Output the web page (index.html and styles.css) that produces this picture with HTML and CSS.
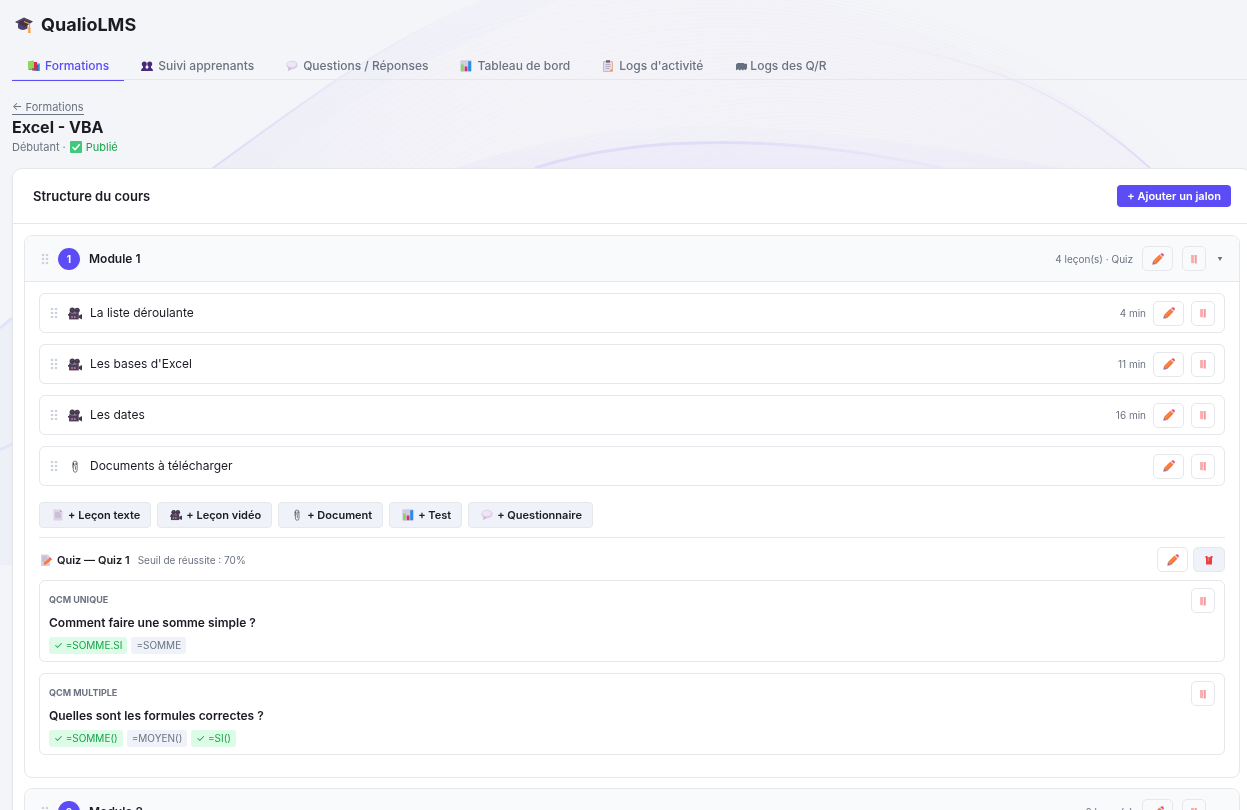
FILE: index.html
```html
<!DOCTYPE html>
<html lang="fr">
<head>
  <meta charset="UTF-8">
  <meta name="viewport" content="width=device-width, initial-scale=1.0">
  <title>QualioLMS</title>
  <link rel="stylesheet" href="styles.css">
</head>
<body>
  <!-- icon set -->
  <svg class="sprite" aria-hidden="true">
    <symbol id="i-cap" viewBox="0 0 18 18">
      <path d="M3 8v4q4.500 3.500 9.500.5V8z" fill="#54406f"/>
      <path d="M0 6 9 1.500 18 5.500 10 11z" fill="#40354f"/>
      <path d="M2 6.200 9 2.700 15.500 5.600" fill="none" stroke="#65587a" stroke-width=".8"/>
      <path d="M9 5.500 14.500 8v5" fill="none" stroke="#f59b2e" stroke-width="1.200"/>
      <path d="M13.300 11h2l.3 6h-2.600z" fill="#f9a04b"/>
    </symbol>
    <symbol id="i-books" viewBox="0 0 12 12">
      <path d="M6 3.500h6V11H6z" fill="#2fb5ea"/>
      <path d="M4 2h5v8.500H4z" fill="#d42a56"/>
      <path d="M9 5v6h1.500V5z" fill="#176fc4"/>
      <path d="M0 1.200 6 .5v7.800L0 9z" fill="#8fd65a"/>
      <path d="M0 9 6 8.300l1 1L1.500 10z" fill="#4a9a4d"/>
    </symbol>
    <symbol id="i-people" viewBox="0 0 12 12">
      <g fill="#48297c">
        <circle cx="3.300" cy="4" r="2.500"/><circle cx="8.700" cy="4" r="2.500"/>
        <path d="M2 5h2.600v3H2zM7.400 5H10v3H7.400zM0 11q0-3 3.200-3.500Q6 8 6 9.500 6 8 8.800 7.500 12 8 12 11z"/>
      </g>
    </symbol>
    <symbol id="i-bubble" viewBox="0 0 12 12">
      <ellipse cx="6" cy="5" rx="5.700" ry="4.200" fill="#dccdeb"/>
      <path d="M2.500 7.500 2 11l4-2z" fill="#cdb9df"/>
      <ellipse cx="5.700" cy="4.300" rx="4.400" ry="2.800" fill="#eee5f6"/>
    </symbol>
    <symbol id="i-chart" viewBox="0 0 12 12">
      <rect x=".3" y=".3" width="11.400" height="11.400" rx="1" fill="#d5cbe0"/>
      <path d="M1 4.500h2.800v6.700H1z" fill="#7fdb5f"/>
      <path d="M4.700 6.500h2.700v4.700H4.700z" fill="#d92c69"/>
      <path d="M8.200 1.200h2.900v10H8.200z" fill="#258dea"/>
    </symbol>
    <symbol id="i-clipboard" viewBox="0 0 12 12">
      <rect x="1" y="1" width="10" height="11" rx="1" fill="#eab28e"/>
      <path d="M2 2h8v7l-2 2H2z" fill="#e2dbea"/>
      <path d="M10 9v2H8z" fill="#ee843f"/>
      <path d="M4 .2h4v2.500H4z" fill="#70667c"/>
      <path d="M3.500 4.500h5M3.500 6.500h5M3.500 8.500h4" stroke="#a69ab5" stroke-width=".7"/>
    </symbol>
    <symbol id="i-chats" viewBox="0 0 12 12">
      <path d="M1 4.500 2.500 3h6l1 .8H12v5h-.8V10H10V9.500H8.500v.7H7V9.500H5.500v.8H4V9.500H2.800L1 10.200z" fill="#68707f"/>
    </symbol>
    <symbol id="i-check" viewBox="0 0 12 12">
      <rect width="12" height="12" rx="1" fill="#42c87c"/>
      <path d="m2.500 6 2.500 2.700L9.700 3.300" fill="none" stroke="#fff" stroke-width="1.500"/>
    </symbol>
    <symbol id="i-camera" viewBox="0 0 13 12">
      <circle cx="4" cy="3" r="2.500" fill="#44374f"/><circle cx="8.500" cy="3" r="2.400" fill="#44374f"/>
      <path d="M1 5h9v6.500H1z" fill="#4d4158"/>
      <path d="m10 8 3-1.500v5L10 10z" fill="#443650"/>
      <path d="M0 6.500h2v1.500H0z" fill="#44374f"/>
      <path d="M3 8.500h1.500V10H3zM5.500 8.500H7V10H5.500z" fill="#e77cba"/>
      <path d="M3.200 2.500h1M7.800 2.500h1M3 6h5" stroke="#83778e" stroke-width=".7"/>
    </symbol>
    <symbol id="i-clip" viewBox="0 0 12 12">
      <path d="M4 7V3q0-2 2-2t2 2v6q0 2.300-1.800 2.300T4.400 9V6q0-1.200 1-1.200t1 1.200v3" fill="none" stroke="#77737a" stroke-width=".9"/>
      <path d="M4.200 2.500h1v2h-1zM6.500 2.500h1v2h-1z" fill="#3c3940"/>
    </symbol>
    <symbol id="i-page" viewBox="0 0 12 12">
      <path d="M1.500.5H8L10.500 3v8.500h-9z" fill="#ddd2e6"/>
      <path d="M8 .5V3h2.500z" fill="#b8a6c8"/>
      <path d="M3 4h5M3 6h6M3 8h6" stroke="#b3a3c4" stroke-width=".8"/>
    </symbol>
    <symbol id="i-memo" viewBox="0 0 12 12">
      <path d="M1 .5h7L10 3v9H1z" fill="#d9cfe3"/>
      <path d="M2.500 3h4M2.500 5h5M2.500 7h3" stroke="#a99cb9" stroke-width=".7"/>
      <path d="m3.500 11 .7-2.500L9 4.200l2 2L6 10.500z" fill="#fa7934"/>
      <path d="m9 4.200 1-.9 2 2-1 .9z" fill="#e4504d"/>
    </symbol>
    <symbol id="i-pencil" viewBox="0 0 12 12">
      <path d="M.3 11.700 1 8l3.300 3z" fill="#a0708f"/>
      <path d="M1 8 7.300 1.800l3 3L4.300 11z" fill="#f8733a"/>
      <path d="m2.400 9 6.300-6" stroke="#ff9a45" stroke-width="1"/>
      <path d="m7.300 1.800.9-.9 3 3-.9.900z" fill="#cbbfda"/>
      <path d="M8.500 1q1.500-1.500 2.700-.2t0 2.800z" fill="#ee4852"/>
    </symbol>
    <symbol id="i-trash" viewBox="0 0 12 12">
      <path d="M3.500 2h5v8.500h-5z" fill="#fcdede"/>
      <path d="M3.500 2.500h1v7.500h-1zM7.300 2h1.200v8.500H7.300z" fill="#f37b7e"/>
      <path d="M5.500 2.500v7.500M3 2.500h2.500M6.500 2.800H9" stroke="#f6abad" stroke-width=".9"/>
    </symbol>
    <symbol id="i-trash-full" viewBox="0 0 12 12">
      <path d="M2.500 2h2v1.300h3V2h2v2H9v6.500H3V4h-.5z" fill="#ee3f43"/>
      <path d="M5.300 4v3" stroke="#f7a3a6" stroke-width=".7"/>
    </symbol>
    <symbol id="i-grip" viewBox="0 0 8 12">
      <g fill="#cbd2df">
        <circle cx="2" cy="2" r="1.300"/><circle cx="6" cy="2" r="1.300"/>
        <circle cx="2" cy="6" r="1.300"/><circle cx="6" cy="6" r="1.300"/>
        <circle cx="2" cy="10" r="1.300"/><circle cx="6" cy="10" r="1.300"/>
      </g>
    </symbol>
  </svg>

  <!-- decorative waves -->
  <svg class="waves" viewBox="0 0 1247 810" preserveAspectRatio="xMidYMin slice" aria-hidden="true">
    <defs>
      <linearGradient id="dome" x1="0" x2="1" y1="0" y2="0">
        <stop offset="0" stop-color="#ebebf6"/>
        <stop offset=".35" stop-color="#f3f3f8"/>
        <stop offset="1" stop-color="#f0eff7"/>
      </linearGradient>
      <linearGradient id="edge" x1="0" x2="0" y1="0" y2="1">
        <stop offset="0" stop-color="#dedbf8" stop-opacity="0"/>
        <stop offset="1" stop-color="#dedaf8"/>
      </linearGradient>
      <linearGradient id="hill" x1="0" x2="0" y1="0" y2="1">
        <stop offset="0" stop-color="#edebf8" stop-opacity=".4"/>
        <stop offset="1" stop-color="#ebe8f8"/>
      </linearGradient>
      <linearGradient id="crest" x1="0" x2="1" y1="0" y2="0">
        <stop offset="0" stop-color="#dfdcf8"/>
        <stop offset=".5" stop-color="#e1ddf7"/>
        <stop offset="1" stop-color="#e6e2f8" stop-opacity=".5"/>
      </linearGradient>
    </defs>
    <path d="M213 168C330 82 420 15 560-30H700C900 20 1060 70 1150 168z" fill="url(#dome)" opacity=".6"/>
    <path d="M213 168C330 82 440 10 560-30L600-20C480 40 340 90 270 168z" fill="#eeeef8" opacity=".4"/>
    <path d="M213 168C310 97 380 45 480 0" fill="none" stroke="url(#edge)" stroke-width="2"/>
    <path d="M840 35C990 60 1065 92 1150 168" fill="none" stroke="url(#edge)" stroke-width="2"/>
    <g id="wave-lines" fill="none" stroke="#e9e8f3" stroke-width="1" opacity=".4"></g>
    <path d="M455 168C600 120 720 105 1060 168z" fill="url(#hill)" opacity=".6"/>
    <path d="M535 168C640 134 790 134 942 168z" fill="#ece9f9" opacity=".6"/>
    <path d="M535 168C640 134 790 134 942 168" fill="none" stroke="url(#crest)" stroke-width="3"/>
    <path d="M0 328 12 318V565H0z" fill="#eef0f7"/>
    <path d="M0 328 12 318M0 450 12 444" stroke="#e2e5f7" stroke-width="3"/>
  </svg>

  <header class="topbar">
    <h1 class="brand"><svg class="brand-icon"><use href="#i-cap"/></svg>QualioLMS</h1>
    <nav class="tabs">
      <a class="tab active" href="#formations"><svg class="icon"><use href="#i-books"/></svg>Formations</a>
      <a class="tab" href="#suivi"><svg class="icon"><use href="#i-people"/></svg>Suivi apprenants</a>
      <a class="tab" href="#questions"><svg class="icon"><use href="#i-bubble"/></svg>Questions / Réponses</a>
      <a class="tab" href="#dashboard"><svg class="icon"><use href="#i-chart"/></svg>Tableau de bord</a>
      <a class="tab" href="#logs"><svg class="icon"><use href="#i-clipboard"/></svg>Logs d'activité</a>
      <a class="tab tab-tight" href="#logs-qr"><svg class="icon"><use href="#i-chats"/></svg>Logs des Q/R</a>
    </nav>
  </header>

  <main class="page">
    <div class="course-head">
      <a class="back" href="#formations">← Formations</a>
      <h2 class="course-title">Excel - VBA</h2>
      <p class="course-meta">Débutant · <svg class="icon"><use href="#i-check"/></svg> <span class="published">Publié</span></p>
    </div>

    <section class="card">
      <div class="card-head">
        <h3 class="card-title">Structure du cours</h3>
        <button class="btn-primary" type="button">+ Ajouter un jalon</button>
      </div>
      <div class="card-body">
        <article class="module">
          <div class="module-head">
            <svg class="grip"><use href="#i-grip"/></svg>
            <span class="module-num">1</span>
            <h4 class="module-title">Module 1</h4>
            <span class="meta">4 leçon(s) · Quiz</span>
            <button class="btn-icon" type="button" aria-label="Modifier"><svg class="icon"><use href="#i-pencil"/></svg></button>
            <button class="btn-icon btn-del" type="button" aria-label="Supprimer"><svg class="icon"><use href="#i-trash"/></svg></button>
            <button class="toggle" type="button" aria-label="Replier">▼</button>
          </div>
          <div class="module-body">
            <ul class="lessons">
              <li class="lesson">
                <svg class="grip"><use href="#i-grip"/></svg>
                <svg class="lesson-icon"><use href="#i-camera"/></svg>
                <span class="lesson-title">La liste déroulante</span>
                <span class="meta">4 min</span>
                <button class="btn-icon" type="button" aria-label="Modifier"><svg class="icon"><use href="#i-pencil"/></svg></button>
                <button class="btn-icon btn-del" type="button" aria-label="Supprimer"><svg class="icon"><use href="#i-trash"/></svg></button>
              </li>
              <li class="lesson">
                <svg class="grip"><use href="#i-grip"/></svg>
                <svg class="lesson-icon"><use href="#i-camera"/></svg>
                <span class="lesson-title">Les bases d'Excel</span>
                <span class="meta">11 min</span>
                <button class="btn-icon" type="button" aria-label="Modifier"><svg class="icon"><use href="#i-pencil"/></svg></button>
                <button class="btn-icon btn-del" type="button" aria-label="Supprimer"><svg class="icon"><use href="#i-trash"/></svg></button>
              </li>
              <li class="lesson">
                <svg class="grip"><use href="#i-grip"/></svg>
                <svg class="lesson-icon"><use href="#i-camera"/></svg>
                <span class="lesson-title">Les dates</span>
                <span class="meta">16 min</span>
                <button class="btn-icon" type="button" aria-label="Modifier"><svg class="icon"><use href="#i-pencil"/></svg></button>
                <button class="btn-icon btn-del" type="button" aria-label="Supprimer"><svg class="icon"><use href="#i-trash"/></svg></button>
              </li>
              <li class="lesson">
                <svg class="grip"><use href="#i-grip"/></svg>
                <svg class="lesson-icon"><use href="#i-clip"/></svg>
                <span class="lesson-title">Documents à télécharger</span>
                <button class="btn-icon" type="button" aria-label="Modifier"><svg class="icon"><use href="#i-pencil"/></svg></button>
                <button class="btn-icon btn-del" type="button" aria-label="Supprimer"><svg class="icon"><use href="#i-trash"/></svg></button>
              </li>
            </ul>

            <div class="add-row">
              <button class="btn-add" type="button"><svg class="icon"><use href="#i-page"/></svg>+ Leçon texte</button>
              <button class="btn-add" type="button"><svg class="icon"><use href="#i-camera"/></svg>+ Leçon vidéo</button>
              <button class="btn-add" type="button"><svg class="icon"><use href="#i-clip"/></svg>+ Document</button>
              <button class="btn-add" type="button"><svg class="icon"><use href="#i-chart"/></svg>+ Test</button>
              <button class="btn-add" type="button"><svg class="icon"><use href="#i-bubble"/></svg>+ Questionnaire</button>
            </div>

            <section class="quiz">
              <div class="quiz-head">
                <svg class="icon"><use href="#i-memo"/></svg>
                <h5 class="quiz-title">Quiz — Quiz 1</h5>
                <span class="meta quiz-meta">Seuil de réussite : 70%</span>
                <button class="btn-icon" type="button" aria-label="Modifier"><svg class="icon"><use href="#i-pencil"/></svg></button>
                <button class="btn-icon btn-grey" type="button" aria-label="Supprimer"><svg class="icon"><use href="#i-trash-full"/></svg></button>
              </div>
              <div class="questions">
                <div class="question">
                  <div class="question-main">
                    <div class="question-type">QCM UNIQUE</div>
                    <div class="question-text">Comment faire une somme simple ?</div>
                    <div class="answers">
                      <span class="answer ok">✓ =SOMME.SI</span>
                      <span class="answer">=SOMME</span>
                    </div>
                  </div>
                  <button class="btn-icon btn-del" type="button" aria-label="Supprimer"><svg class="icon"><use href="#i-trash"/></svg></button>
                </div>
                <div class="question">
                  <div class="question-main">
                    <div class="question-type">QCM MULTIPLE</div>
                    <div class="question-text">Quelles sont les formules correctes ?</div>
                    <div class="answers">
                      <span class="answer ok">✓ =SOMME()</span>
                      <span class="answer">=MOYEN()</span>
                      <span class="answer ok">✓ =SI()</span>
                    </div>
                  </div>
                  <button class="btn-icon btn-del" type="button" aria-label="Supprimer"><svg class="icon"><use href="#i-trash"/></svg></button>
                </div>
              </div>
            </section>
          </div>
        </article>

        <article class="module">
          <div class="module-head">
            <svg class="grip"><use href="#i-grip"/></svg>
            <span class="module-num">2</span>
            <h4 class="module-title">Module 2</h4>
            <span class="meta">0 leçon(s)</span>
            <button class="btn-icon" type="button" aria-label="Modifier"><svg class="icon"><use href="#i-pencil"/></svg></button>
            <button class="btn-icon btn-del" type="button" aria-label="Supprimer"><svg class="icon"><use href="#i-trash"/></svg></button>
            <button class="toggle" type="button" aria-label="Replier">▼</button>
          </div>
        </article>
      </div>
    </section>
  </main>
  <script src="waves.js"></script>
</body>
</html>
```
FILE: styles.css
```css
* {
  box-sizing: border-box;
}
html {
  overflow-x: hidden;
  scrollbar-width: none;
}
body {
  margin: 0;
  background: #f4f5f8;
  color: #1a1b23;
  font-family: Inter, "Liberation Sans", sans-serif;
  font-size: 12px;
  line-height: 16px;
}
h1, h2, h3, h4, h5, p, ul {
  margin: 0;
  padding: 0;
}
button {
  font-family: inherit;
  cursor: pointer;
}
.sprite {
  position: absolute;
  width: 0;
  height: 0;
}
.waves {
  position: fixed;
  left: 0;
  top: 0;
  width: 100%;
  height: 100%;
  z-index: -1;
}
.icon {
  width: 12px;
  height: 12px;
  flex: none;
}

/* header */
.topbar {
  padding: 13px 0 0 12px;
}
.brand {
  display: flex;
  align-items: center;
  gap: 8px;
  padding-left: 3px;
  font-size: 18px;
  line-height: 24px;
  font-weight: 700;
}
.brand-icon {
  width: 18px;
  height: 18px;
}
.tabs {
  display: flex;
  gap: 1px;
  margin-top: 15px;
  border-bottom: 1px solid #e5e7eb;
}
.tab {
  display: flex;
  align-items: center;
  gap: 5px;
  padding: 6px 15px 6px 16px;
  margin-bottom: -2px;
  border-bottom: 1px solid transparent;
  color: #6b7280;
  font-weight: 500;
  text-decoration: none;
}
.tab.active {
  color: #5b4cf5;
  border-color: #5b4cf5;
}
.tab-tight {
  gap: 3px;
}

/* course heading */
.page {
  padding: 19px 0 0 12px;
}
.back {
  display: inline-block;
  border-bottom: 1px solid #6b7280;
  color: #6b7280;
  font-size: 11px;
  line-height: 13px;
  text-decoration: none;
}
.course-title {
  font-size: 16px;
  line-height: 24px;
  font-weight: 700;
}
.course-meta {
  display: flex;
  align-items: center;
  gap: 4px;
  color: #6b7280;
  font-size: 11px;
  line-height: 16px;
}
.published {
  color: #16a34a;
}

/* structure card, runs under the right edge of the window */
.card {
  margin: 13px -5px 0 0;
  background: #fff;
  border: 1px solid #e5e7eb;
  border-radius: 10px;
  box-shadow: 0 1px 3px rgba(0, 0, 0, .05);
}
.card-head {
  display: flex;
  align-items: center;
  justify-content: space-between;
  padding: 16px 20px;
  border-bottom: 1px solid #e5e7eb;
}
.card-title {
  font-size: 13px;
  line-height: 16px;
  font-weight: 600;
}
.btn-primary {
  height: 22px;
  padding: 0 10px;
  border: 0;
  border-radius: 4px;
  background: #5b4cf5;
  color: #fff;
  font-size: 11px;
  font-weight: 600;
}
.card-body {
  display: flex;
  flex-direction: column;
  gap: 10px;
  padding: 11px;
}

/* modules */
.module {
  border: 1px solid #e5e7eb;
  border-radius: 8px;
  overflow: hidden;
}
.module-head {
  display: flex;
  align-items: center;
  gap: 9px;
  height: 46px;
  padding: 0 14px 0 16px;
  background: #f9fafc;
  border-bottom: 1px solid #e5e7eb;
}
.grip {
  width: 8px;
  height: 12px;
  flex: none;
}
.module-num {
  display: flex;
  align-items: center;
  justify-content: center;
  width: 22px;
  height: 22px;
  border-radius: 50%;
  background: #5b4cf5;
  color: #fff;
  font-size: 10px;
  font-weight: 700;
}
.module-title {
  flex: 1;
  font-size: 12px;
  font-weight: 600;
}
.meta {
  color: #6b7280;
  font-size: 10px;
}
.btn-icon {
  display: flex;
  align-items: center;
  justify-content: center;
  flex: none;
  width: 31px;
  height: 25px;
  padding: 0;
  border: 1px solid #e5e7eb;
  border-radius: 5px;
  background: transparent;
}
.btn-del {
  width: 24px;
}
.btn-grey {
  width: 32px;
  background: #eff2f8;
}
.toggle {
  width: 10px;
  padding: 0;
  border: 0;
  background: none;
  color: #6b7280;
  font-size: 5px;
}
.module-body {
  padding: 11px 14px 22px;
}

/* lessons */
.lessons {
  display: flex;
  flex-direction: column;
  gap: 11px;
  list-style: none;
}
.lesson {
  display: flex;
  align-items: center;
  gap: 7px;
  min-height: 40px;
  padding: 0 9px 0 10px;
  border: 1px solid #e5e7eb;
  border-radius: 6px;
}
.lesson-icon {
  width: 14px;
  height: 13px;
  margin: 0 1px 0 3px;
  flex: none;
}
.lesson-title {
  flex: 1;
}
.add-row {
  display: flex;
  gap: 6px;
  padding: 16px 0 9px;
}
.btn-add {
  display: flex;
  align-items: center;
  gap: 4px;
  height: 26px;
  padding: 0 10px 0 12px;
  border: 1px solid #e5e7eb;
  border-radius: 4px;
  background: #eff2f8;
  color: #1a1b23;
  font-size: 11px;
  font-weight: 600;
}

/* quiz */
.quiz {
  border-top: 1px solid #e5e7eb;
  padding-top: 9px;
}
.quiz-head {
  display: flex;
  align-items: center;
  gap: 5px;
  padding-left: 1px;
}
.quiz-title {
  font-size: 11px;
  font-weight: 600;
}
.quiz-meta {
  flex: 1;
  padding-left: 3px;
}
.questions {
  display: flex;
  flex-direction: column;
  gap: 11px;
  padding-top: 8px;
}
.question {
  display: flex;
  align-items: flex-start;
  padding: 7px 9px;
  border: 1px solid #e5e7eb;
  border-radius: 6px;
}
.question-main {
  flex: 1;
}
.question-type {
  padding-top: 4px;
  color: #6b7280;
  font-size: 9px;
  font-weight: 700;
}
.question-text {
  padding: 7px 0 6px;
  font-weight: 600;
}
.answers {
  display: flex;
  gap: 4px;
}
.answer {
  padding: 0 5px;
  border-radius: 3px;
  background: #eff2f8;
  color: #6b7280;
  font-size: 10px;
  line-height: 17px;
}
.answer.ok {
  background: #dcfce7;
  color: #16a34a;
}
```
FILE: waves.js
```js
// fine lines between the outer and inner curves of the background
const group = document.getElementById("wave-lines");
for (let i = 0; i < 44; i++) {
  const path = document.createElementNS("http://www.w3.org/2000/svg", "path");
  const left = 240 + i * 9;
  const right = 1185 - i * 4;
  const top = -75 + i * 5;
  path.setAttribute("d", `M${left} 168C${left + 180} ${top + 20} ${right - 260} ${top - 20} ${right} 168`);
  path.setAttribute("opacity", 0.35 + (i % 4) * 0.15);
  group.appendChild(path);
}
```
